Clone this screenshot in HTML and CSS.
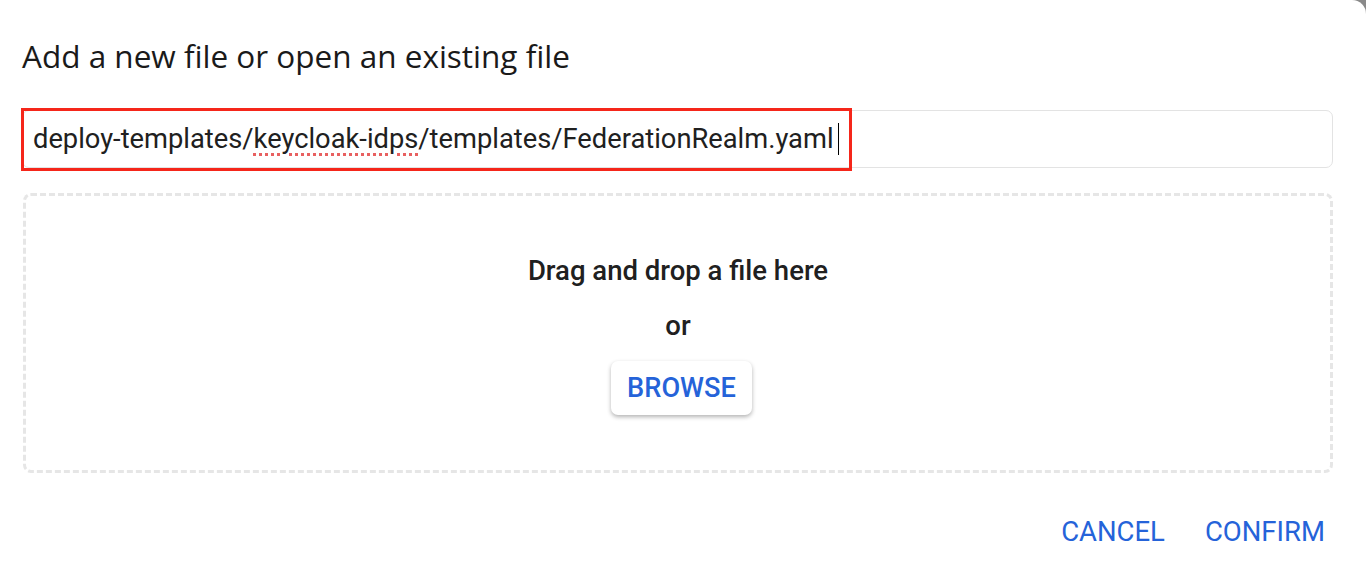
FILE: index.html
```html
<!DOCTYPE html>
<html>
<head>
<meta charset="utf-8">
<link rel="stylesheet" href="styles.css">
</head>
<body>
<div class="dialog">
  <h1 class="title">Add a new file or open an existing file</h1>
  <div class="field">
    <div class="input"><span class="value">deploy-templates/<span class="misspelled">keycloak-idps</span>/templates/FederationRealm.yaml</span><span class="caret"></span></div>
    <div class="highlight"></div>
  </div>
  <div class="dropzone">
    <div class="drop-text">Drag and drop a file here</div>
    <div class="or">or</div>
    <button class="browse">BROWSE</button>
  </div>
  <div class="actions">
    <button class="text-btn">CANCEL</button>
    <button class="text-btn">CONFIRM</button>
  </div>
</div>
</body>
</html>
```
FILE: styles.css
```css
html, body {
  margin: 0;
  padding: 0;
  height: 100%;
}
body {
  background: #8a8a8a;
  overflow: hidden;
}
.dialog {
  background: #fff;
  height: 583px;
  box-sizing: border-box;
  border-top-right-radius: 14px;
  padding: 36px 33px 0 22px;
  font-family: Roboto, "Liberation Sans", sans-serif;
}
.title {
  margin: 0;
  font-family: "Open Sans", "Noto Sans", sans-serif;
  font-weight: 400;
  font-size: 31.5px;
  line-height: 40px;
  color: #1a1a1a;
}
.field {
  position: relative;
  margin-top: 34px;
}
.input {
  height: 58px;
  box-sizing: border-box;
  border: 1px solid #e3e3e3;
  border-radius: 7px;
  display: flex;
  align-items: center;
  padding-left: 10px;
  font-size: 27.3px;
  color: #202020;
}
.misspelled {
  text-decoration: underline dotted #e86060;
  text-decoration-thickness: 3px;
  text-underline-offset: 5px;
}
.caret {
  display: inline-block;
  width: 1.5px;
  height: 32px;
  background: #000;
  margin-left: 4px;
}
.highlight {
  position: absolute;
  left: -1px;
  top: -2px;
  width: 831px;
  height: 63px;
  box-sizing: border-box;
  border: 3px solid #f5261a;
}
.dropzone {
  margin-top: 25px;
  margin-left: 1px;
  height: 280px;
  box-sizing: border-box;
  border: 3px dashed #e6e6e6;
  border-radius: 8px;
  display: flex;
  flex-direction: column;
  align-items: center;
  padding-top: 59px;
}
.drop-text {
  font-size: 27.5px;
  font-weight: 500;
  color: #202020;
  line-height: 32px;
}
.or {
  font-size: 27.5px;
  font-weight: 500;
  color: #202020;
  line-height: 32px;
  margin-top: 23px;
}
.browse {
  margin-top: 19px;
  margin-left: 7px;
  border: none;
  background: #fff;
  border-radius: 7px;
  box-shadow: 0 2px 4px rgba(0,0,0,0.3);
  font-family: Roboto, "Liberation Sans", sans-serif;
  font-weight: 500;
  font-size: 27.2px;
  color: #2563d9;
  padding: 0 16px;
  height: 54px;
}
.actions {
  display: flex;
  justify-content: flex-end;
  gap: 40px;
  margin-top: 44px;
  padding-right: 8px;
}
.text-btn {
  border: none;
  background: none;
  padding: 0;
  font-family: Roboto, "Liberation Sans", sans-serif;
  font-size: 27.5px;
  font-weight: 400;
  color: #2563d9;
  line-height: 30px;
}
```
